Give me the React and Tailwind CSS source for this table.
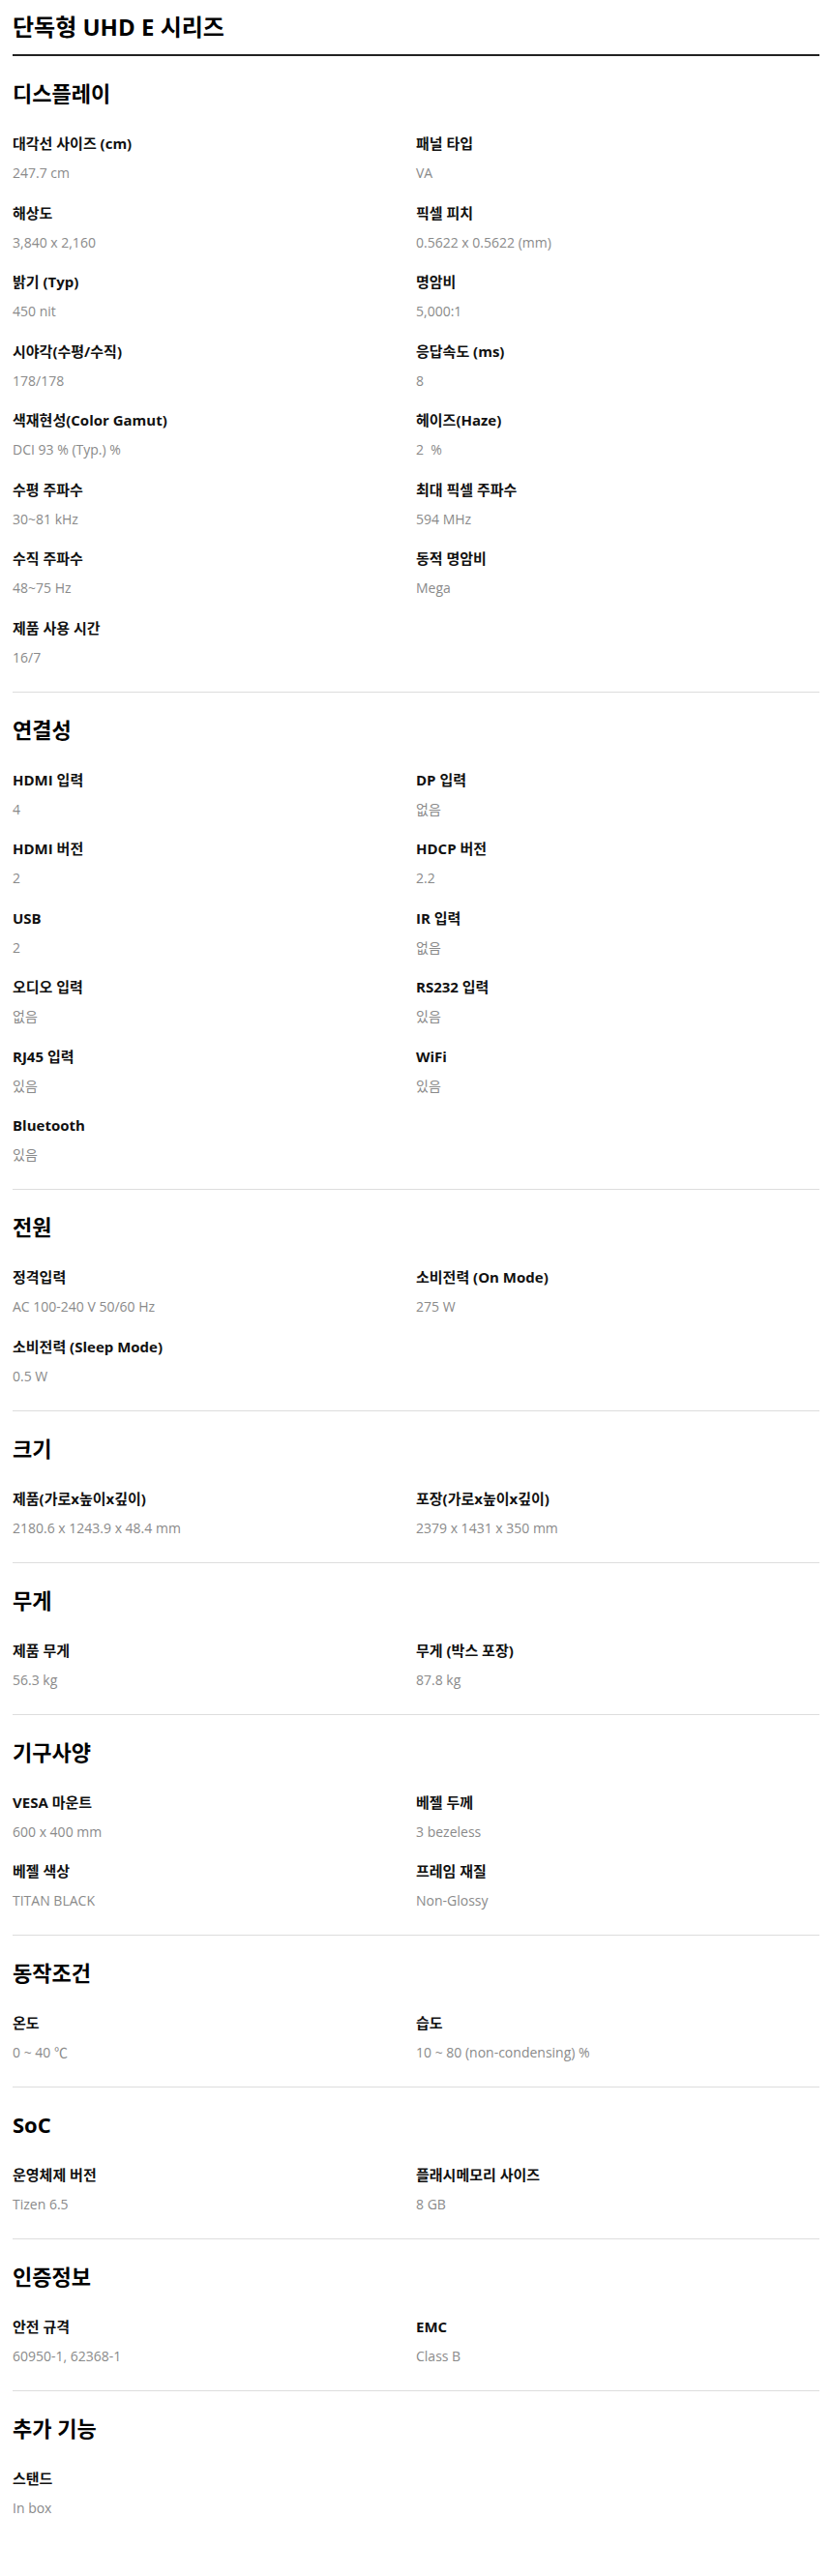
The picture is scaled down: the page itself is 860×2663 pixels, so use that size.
const sections = [
  {
    title: '디스플레이',
    items: [
      ['대각선 사이즈 (cm)', '247.7 cm'],
      ['패널 타입', 'VA'],
      ['해상도', '3,840 x 2,160'],
      ['픽셀 피치', '0.5622 x 0.5622 (mm)'],
      ['밝기 (Typ)', '450 nit'],
      ['명암비', '5,000:1'],
      ['시야각(수평/수직)', '178/178'],
      ['응답속도 (ms)', '8'],
      ['색재현성(Color Gamut)', 'DCI 93 % (Typ.) %'],
      ['헤이즈(Haze)', '2  %'],
      ['수평 주파수', '30~81 kHz'],
      ['최대 픽셀 주파수', '594 MHz'],
      ['수직 주파수', '48~75 Hz'],
      ['동적 명암비', 'Mega'],
      ['제품 사용 시간', '16/7'],
    ],
  },
  {
    title: '연결성',
    items: [
      ['HDMI 입력', '4'],
      ['DP 입력', '없음'],
      ['HDMI 버전', '2'],
      ['HDCP 버전', '2.2'],
      ['USB', '2'],
      ['IR 입력', '없음'],
      ['오디오 입력', '없음'],
      ['RS232 입력', '있음'],
      ['RJ45 입력', '있음'],
      ['WiFi', '있음'],
      ['Bluetooth', '있음'],
    ],
  },
  {
    title: '전원',
    items: [
      ['정격입력', 'AC 100-240 V 50/60 Hz'],
      ['소비전력 (On Mode)', '275 W'],
      ['소비전력 (Sleep Mode)', '0.5 W'],
    ],
  },
  {
    title: '크기',
    items: [
      ['제품(가로x높이x깊이)', '2180.6 x 1243.9 x 48.4 mm'],
      ['포장(가로x높이x깊이)', '2379 x 1431 x 350 mm'],
    ],
  },
  {
    title: '무게',
    items: [
      ['제품 무게', '56.3 kg'],
      ['무게 (박스 포장)', '87.8 kg'],
    ],
  },
  {
    title: '기구사양',
    items: [
      ['VESA 마운트', '600 x 400 mm'],
      ['베젤 두께', '3 bezeless'],
      ['베젤 색상', 'TITAN BLACK'],
      ['프레임 재질', 'Non-Glossy'],
    ],
  },
  {
    title: '동작조건',
    items: [
      ['온도', '0 ~ 40 ℃'],
      ['습도', '10 ~ 80 (non-condensing) %'],
    ],
  },
  {
    title: 'SoC',
    items: [
      ['운영체제 버전', 'Tizen 6.5'],
      ['플래시메모리 사이즈', '8 GB'],
    ],
  },
  {
    title: '인증정보',
    items: [
      ['안전 규격', '60950-1, 62368-1'],
      ['EMC', 'Class B'],
    ],
  },
  {
    title: '추가 기능',
    items: [['스탠드', 'In box']],
  },
];

function SpecSection({ title, items, last }) {
  return (
    <section className={`pt-[23px] pb-[25px] ${last ? '' : 'border-b border-[#dddddd]'}`}>
      <h2 className="text-[22px] leading-[30px] font-bold text-black">{title}</h2>
      <dl className="grid grid-cols-2 gap-y-[19.5px] mt-[26px]">
        {items.map(([label, value]) => (
          <div key={label} className="flex flex-col">
            <dt className="text-[15px] leading-[22px] font-bold text-[#111111]">{label}</dt>
            <dd className="mt-[10px] text-[14px] leading-[20px] text-[#8a8a8a] whitespace-pre">{value}</dd>
          </div>
        ))}
      </dl>
    </section>
  );
}

export default function App() {
  return (
    <div
      className="w-full min-h-screen bg-white px-[13px] pb-[60px]"
      style={{ fontFamily: '"Open Sans", "Noto Sans CJK KR", sans-serif' }}
    >
      <header className="pt-[12px] pb-[12px] border-b-2 border-[#222222]">
        <h1 className="text-[24px] leading-[32px] font-bold text-black">단독형 UHD E 시리즈</h1>
      </header>
      {sections.map((s, i) => (
        <SpecSection key={s.title} title={s.title} items={s.items} last={i === sections.length - 1} />
      ))}
    </div>
  );
}
